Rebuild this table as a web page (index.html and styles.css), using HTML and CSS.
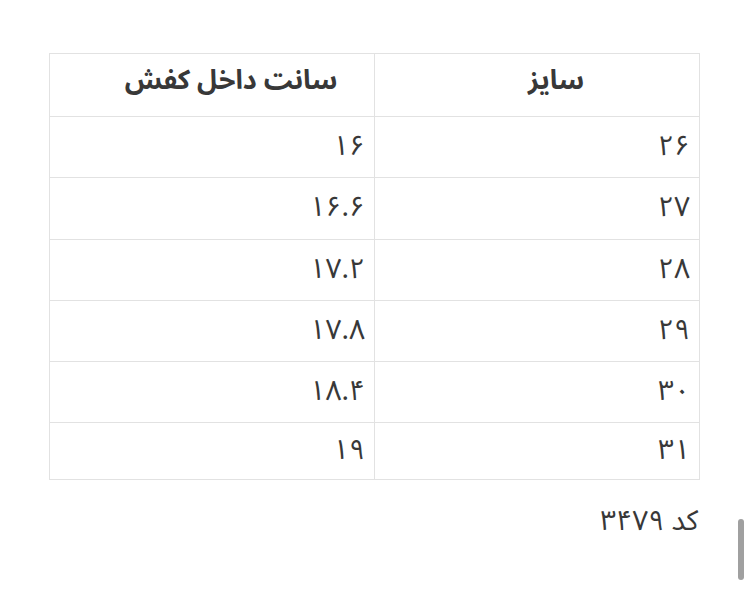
FILE: index.html
```html
<!DOCTYPE html>
<html lang="fa" dir="rtl">
<head>
<meta charset="utf-8">
<link rel="stylesheet" href="styles.css">
</head>
<body>
<main class="page">
  <table class="sizes">
    <thead>
      <tr><th>سایز</th><th>سانت داخل کفش</th></tr>
    </thead>
    <tbody>
      <tr><td>۲۶</td><td>۱۶</td></tr>
      <tr><td>۲۷</td><td>۱۶.۶</td></tr>
      <tr><td>۲۸</td><td>۱۷.۲</td></tr>
      <tr><td>۲۹</td><td>۱۷.۸</td></tr>
      <tr><td>۳۰</td><td>۱۸.۴</td></tr>
      <tr class="last"><td>۳۱</td><td>۱۹</td></tr>
    </tbody>
  </table>
  <p class="code">کد ۳۴۷۹</p>
</main>
<div class="scrollbar"></div>
</body>
</html>
```
FILE: styles.css
```css
html, body {
  margin: 0;
  padding: 0;
  background: #fff;
}
body {
  font-family: "Noto Sans Arabic", "Vazirmatn", "DejaVu Sans", sans-serif;
  color: #383838;
  width: 750px;
  height: 614px;
  overflow: hidden;
}
.page {
  padding: 53px 50px 0 49px;
}
.sizes {
  width: 651px;
  border-collapse: collapse;
  table-layout: fixed;
}
.sizes th, .sizes td {
  border: 1px solid #e2e2e2;
  width: 50%;
}
.sizes th {
  height: 54px;
  font-size: 27px;
  font-weight: bold;
  line-height: 40px;
  text-align: center;
  padding: 0 0 8px 38px;
}
.sizes td {
  height: 60.3px;
  font-size: 28px;
  line-height: 40px;
  text-align: right;
  padding: 0 9px 0 0;
}
.sizes tr.last td {
  height: 56px;
}
.code {
  margin: 22px 2px 0 0;
  font-size: 28px;
  line-height: 40px;
  text-align: right;
}
.scrollbar {
  position: absolute;
  left: 738px;
  top: 519px;
  width: 6px;
  height: 61px;
  border-radius: 3px;
  background: #a0a0a0;
}
```
